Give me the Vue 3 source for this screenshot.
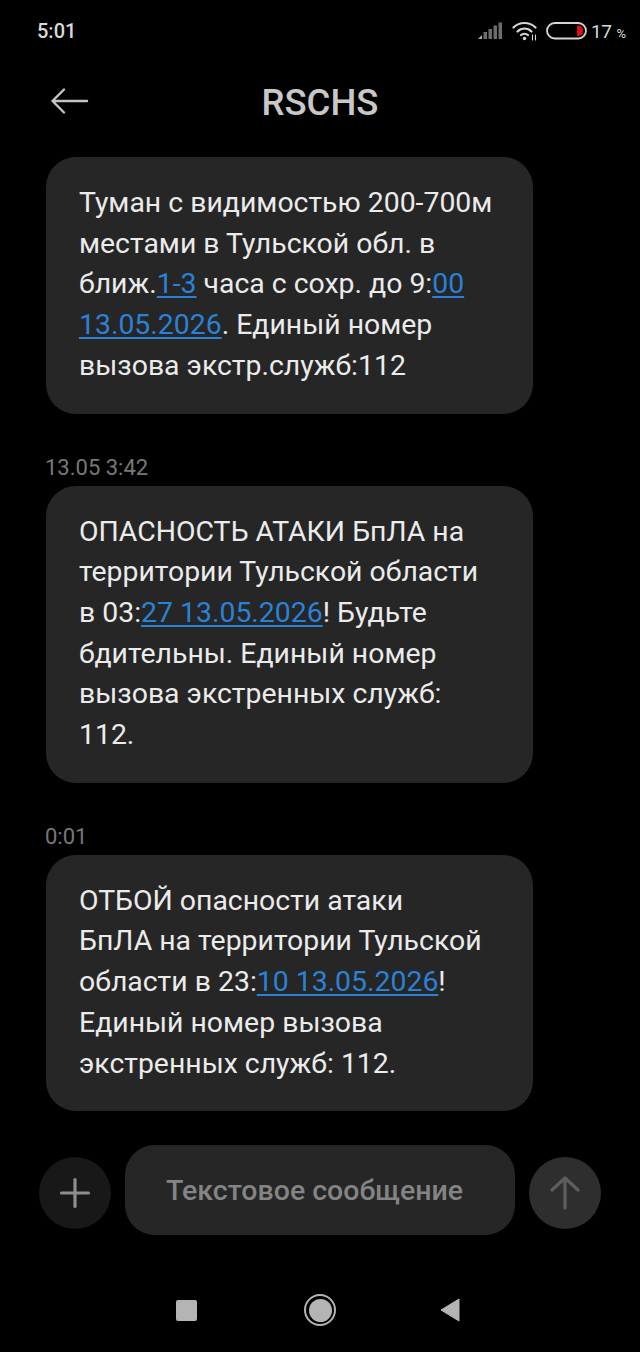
<script setup>
const messages = [
  {
    id: 1,
    lines: [
      [{ t: 'Туман с видимостью 200-700м' }],
      [{ t: 'местами в Тульской обл. в' }],
      [{ t: 'ближ.' }, { t: '1-3', link: true }, { t: ' часа с сохр. до 9:' }, { t: '00', link: true }],
      [{ t: '13.05.2026', link: true }, { t: '. Единый номер' }],
      [{ t: 'вызова экстр.служб:112' }]
    ]
  },
  {
    id: 2,
    time: '13.05 3:42',
    lines: [
      [{ t: 'ОПАСНОСТЬ АТАКИ БпЛА на' }],
      [{ t: 'территории Тульской области' }],
      [{ t: 'в 03:' }, { t: '27 13.05.2026', link: true }, { t: '! Будьте' }],
      [{ t: 'бдительны. Единый номер' }],
      [{ t: 'вызова экстренных служб:' }],
      [{ t: '112.' }]
    ]
  },
  {
    id: 3,
    time: '0:01',
    lines: [
      [{ t: 'ОТБОЙ опасности атаки' }],
      [{ t: 'БпЛА на территории Тульской' }],
      [{ t: 'области в 23:' }, { t: '10 13.05.2026', link: true }, { t: '!' }],
      [{ t: 'Единый номер вызова' }],
      [{ t: 'экстренных служб: 112.' }]
    ]
  }
]
</script>

<template>
  <div class="screen">
    <div class="status">
      <span class="clock">5:01</span>
      <div class="status-right">
        <svg class="signal" width="26" height="18" viewBox="0 0 26 18">
          <path d="M1 17 L5 13 V17 Z" fill="#a8a8a8" />
          <rect x="6.500" y="10" width="3.500" height="7" fill="#6c6c6c" />
          <rect x="11.500" y="7" width="3.500" height="10" fill="#6c6c6c" />
          <rect x="16.500" y="3.500" width="3.500" height="13.500" fill="#6c6c6c" />
          <rect x="21.500" y="0.500" width="3.500" height="16.500" fill="#6c6c6c" />
        </svg>
        <svg class="wifi" width="26" height="20" viewBox="0 0 26 20" fill="none" stroke="#d6d6d6" stroke-width="2.2" stroke-linecap="round">
          <path d="M1.500 6.500 C7.500 0.500 17.500 0.500 23.500 6.500" />
          <path d="M5.500 10.500 C9.500 6.500 15.500 6.500 19.500 10.500" />
          <path d="M9 14 C11 12.300 14 12.300 16 14" />
          <circle cx="12.500" cy="17.500" r="1.700" fill="#d6d6d6" stroke="none" />
          <path d="M20.500 14 V19 M23.500 14 V19" stroke-width="1.100" />
        </svg>
        <svg class="battery" width="42" height="18" viewBox="0 0 42 18">
          <rect x="1" y="1" width="39" height="15.500" rx="7.750" fill="none" stroke="#d6d6d6" stroke-width="1.800" />
          <path d="M31 3.500 H32.500 A5.300 5.300 0 0 1 32.500 14 H31 Z" fill="#e01010" />
        </svg>
        <span class="percent">17<small>%</small></span>
      </div>
    </div>

    <header class="title-bar">
      <svg class="back" width="40" height="28" viewBox="0 0 40 28" fill="none" stroke="#c4c4c4" stroke-width="2.400" stroke-linecap="round" stroke-linejoin="round">
        <path d="M2.500 14 H37 M14 2.500 L2.500 14 L14 25.500" />
      </svg>
      <h1>RSCHS</h1>
    </header>

    <main class="thread">
      <section v-for="m in messages" :key="m.id" class="item">
        <div v-if="m.time" class="time">{{ m.time }}</div>
        <div class="bubble">
          <div v-for="(line, i) in m.lines" :key="i" class="line">
            <template v-for="(part, j) in line" :key="j">
              <a v-if="part.link" class="link">{{ part.t }}</a>
              <span v-else>{{ part.t }}</span>
            </template>
          </div>
        </div>
      </section>
    </main>

    <div class="composer">
      <button class="round plus">
        <svg width="32" height="32" viewBox="0 0 32 32" stroke="#8e8e8e" stroke-width="3.200" stroke-linecap="round">
          <path d="M16 2.500 V29.500 M2.500 16 H29.500" />
        </svg>
      </button>
      <div class="input">Текстовое сообщение</div>
      <button class="round send">
        <svg width="32" height="36" viewBox="0 0 32 36" fill="none" stroke="#5e5e5e" stroke-width="3.200" stroke-linecap="round" stroke-linejoin="round">
          <path d="M16 3 V33 M3 15 L16 3 L29 15" />
        </svg>
      </button>
    </div>

    <nav class="navbar">
      <span class="nav-square"></span>
      <span class="nav-circle"><i></i></span>
      <svg width="20" height="24" viewBox="0 0 20 24">
        <path d="M19 1 V23 L1 12 Z" fill="#b4b4b4" stroke="#b4b4b4" stroke-linejoin="round" />
      </svg>
    </nav>
  </div>
</template>

<style>
html,
body {
  margin: 0;
  background: #000;
}
</style>

<style scoped>
.screen {
  width: 640px;
  height: 1352px;
  background: #000;
  font-family: Roboto, "Liberation Sans", sans-serif;
  overflow: hidden;
}

.status {
  height: 62px;
  padding: 0 14px 0 37px;
  display: flex;
  align-items: center;
  justify-content: space-between;
  box-sizing: border-box;
}

.clock {
  color: #d8d8d8;
  font-size: 20px;
  font-weight: 500;
}

.status-right {
  display: flex;
  align-items: center;
}

.signal {
  margin-right: 9px;
}

.wifi {
  margin-right: 8px;
}

.battery {
  margin-right: 3px;
}

.percent {
  color: #d8d8d8;
  font-size: 19px;
  letter-spacing: -0.5px;
}

.percent small {
  font-size: 13px;
  margin-left: 5px;
  letter-spacing: 0;
}

.title-bar {
  height: 80px;
  position: relative;
  display: flex;
  align-items: center;
  justify-content: center;
}

.title-bar h1 {
  margin: 0;
  color: #c8c8c8;
  font-size: 36.5px;
  font-weight: 500;
}

.back {
  position: absolute;
  left: 50px;
  top: 25px;
}

.thread {
  padding: 15px 107px 0 46px;
}

.item {
  margin-bottom: 41px;
}

.time {
  color: #787878;
  font-size: 22px;
  line-height: 26px;
  margin: 0 0 5px -1px;
}

.bubble {
  background: #262626;
  border-radius: 30px;
  padding: 26px 20px 27px 33px;
  color: #ebebeb;
  font-size: 28.4px;
  line-height: 40.7px;
  white-space: nowrap;
}

.link {
  color: #2a82d8;
  text-decoration: underline;
  text-decoration-thickness: 2px;
  text-underline-offset: 3px;
}

.composer {
  margin-top: -7px;
  padding: 0 39px;
  display: flex;
  align-items: center;
  justify-content: space-between;
}

.round {
  width: 72px;
  height: 72px;
  margin-top: 6px;
  padding: 0;
  border: none;
  border-radius: 50%;
  display: flex;
  align-items: center;
  justify-content: center;
}

.plus {
  background: #181818;
}

.send {
  background: #2e2e2e;
}

.input {
  width: 390px;
  height: 90px;
  padding-left: 41px;
  border-radius: 30px;
  background: #262626;
  color: #848484;
  font-size: 28.5px;
  font-weight: 500;
  display: flex;
  align-items: center;
  box-sizing: border-box;
}

.navbar {
  margin-top: 59px;
  padding-left: 176px;
  display: flex;
  align-items: center;
}

.nav-square {
  width: 21px;
  height: 21px;
  margin-right: 107px;
  background: #b4b4b4;
  border-radius: 2px;
}

.nav-circle {
  width: 32px;
  height: 32px;
  margin-right: 104px;
  box-sizing: border-box;
  border: 2px solid #b4b4b4;
  border-radius: 50%;
  display: flex;
  align-items: center;
  justify-content: center;
}

.nav-circle i {
  width: 23px;
  height: 23px;
  background: #b4b4b4;
  border-radius: 50%;
}
</style>
